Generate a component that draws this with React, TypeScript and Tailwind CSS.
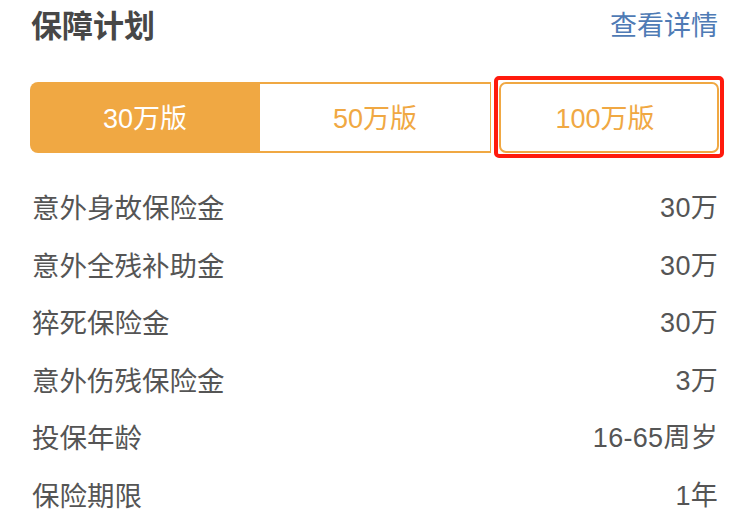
import React from "react";

const rows: [string, string][] = [
  ["意外身故保险金", "30万"],
  ["意外全残补助金", "30万"],
  ["猝死保险金", "30万"],
  ["意外伤残保险金", "3万"],
  ["投保年龄", "16-65周岁"],
  ["保险期限", "1年"],
];

export default function App() {
  return (
    <div
      className="w-[750px] h-[522px] overflow-hidden bg-white"
      style={{ fontFamily: '"Liberation Sans", "Noto Sans CJK SC", sans-serif' }}
    >
      <div className="h-[52px] pl-[31px] pr-[32px] flex items-center justify-between">
        <div className="text-[31px] font-bold text-[#474747] leading-none">保障计划</div>
        <div className="text-[27px] text-[#4f7bb5] leading-none">查看详情</div>
      </div>

      <div className="relative mt-[30px] ml-[30px] w-[690px] h-[71px] flex">
        <div className="w-[230px] h-full bg-[#f0a843] rounded-l-[8px] flex items-center justify-center pt-[3px] text-white text-[27px] leading-none">
          30万版
        </div>
        <div className="w-[231px] h-full border-y-2 border-r-[1.5px] border-[#f0a843] flex items-center justify-center pt-[3px] text-[#f0a843] text-[27px] leading-none">
          50万版
        </div>
        <div className="flex-1 h-full pl-[8px] pr-[1px]">
          <div className="w-full h-full border-2 border-[#f0a843] rounded-[7px] flex items-center justify-center pt-[3px] text-[#f0a843] text-[27px] leading-none pr-[8px]">
            100万版
          </div>
        </div>
        <div className="absolute left-[464px] top-[-6px] w-[230px] h-[82px] border-4 border-[#ff1a0d] rounded-[5px]" />
      </div>

      <div className="mt-[27px] px-[32px]">
        {rows.map(([k, v]) => (
          <div key={k} className="h-[57.5px] flex items-center justify-between text-[#555555] leading-none">
            <span className="text-[27.5px]">{k}</span>
            <span className="text-[27px] tracking-[0.3px]">{v}</span>
          </div>
        ))}
      </div>
    </div>
  );
}
